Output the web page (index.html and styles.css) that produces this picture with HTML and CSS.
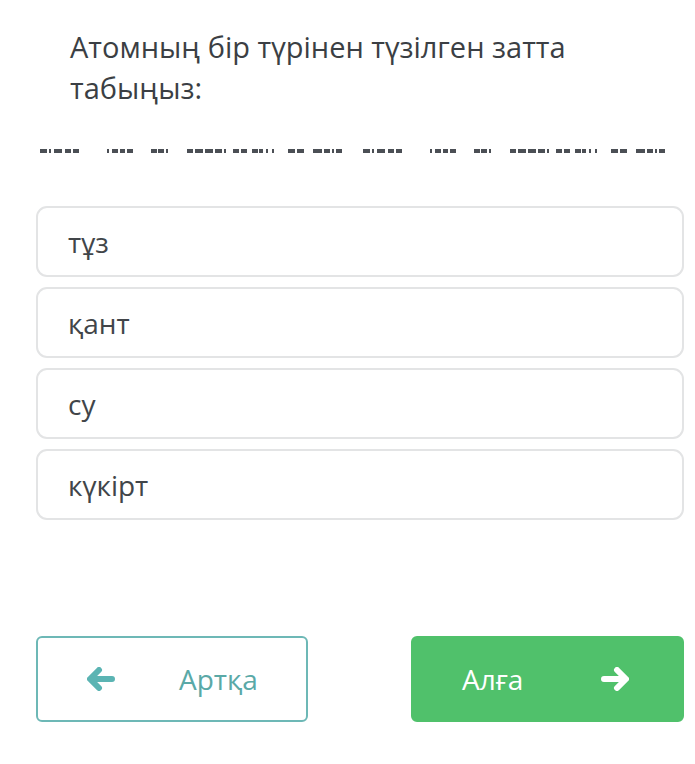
FILE: index.html
```html
<!DOCTYPE html>
<html lang="kk">
<head>
<meta charset="utf-8">
<link rel="stylesheet" href="styles.css">
</head>
<body>
<div class="page">
  <h1 class="question">Атомның бір түрінен түзілген затта табыңыз:</h1>
  <svg class="dashes" width="695" height="4" viewBox="0 0 695 4" aria-hidden="true">
    <g fill="#4b4f55">
      <g id="half">
        <rect x="40" y="0" width="7" height="4"/><rect x="49" y="0" width="2" height="4"/><rect x="54" y="0" width="8" height="4"/><rect x="65" y="0" width="6" height="4"/><rect x="73" y="0" width="6" height="4"/>
        <rect x="107" y="0" width="2" height="4"/><rect x="112" y="0" width="6" height="4"/><rect x="120" y="0" width="5" height="4"/><rect x="127" y="0" width="6" height="4"/>
        <rect x="151" y="0" width="6" height="4"/><rect x="158" y="0" width="6" height="4"/><rect x="166" y="0" width="2" height="4"/>
        <rect x="187" y="0" width="6" height="4"/><rect x="195" y="0" width="8" height="4"/><rect x="205" y="0" width="8" height="4"/><rect x="215" y="0" width="7" height="4"/><rect x="224" y="0" width="2" height="4"/>
        <rect x="233" y="0" width="6" height="4"/><rect x="241" y="0" width="6" height="4"/>
        <rect x="252" y="0" width="6" height="4"/><rect x="259" y="0" width="4" height="4"/><rect x="266" y="0" width="2" height="4"/><rect x="272" y="0" width="2" height="4"/>
        <rect x="288" y="0" width="7" height="4"/><rect x="297" y="0" width="7" height="4"/>
        <rect x="313" y="0" width="9" height="4"/><rect x="324" y="0" width="6" height="4"/><rect x="332" y="0" width="2" height="4"/><rect x="336" y="0" width="6" height="4"/>
      </g>
      <use href="#half" x="323"/>
    </g>
  </svg>
  <ul class="options">
    <li class="option">тұз</li>
    <li class="option">қант</li>
    <li class="option">су</li>
    <li class="option">күкірт</li>
  </ul>
  <div class="nav">
    <button class="btn btn-back">
      <svg class="arrow" width="28" height="24" viewBox="0 0 28 24" aria-hidden="true"><path d="M12 3 L3 12 L12 21 M4 12 H25" fill="none" stroke="currentColor" stroke-width="6" stroke-linecap="round" stroke-linejoin="round"/></svg>
      <span class="btn-label">Артқа</span>
    </button>
    <button class="btn btn-next">
      <span class="btn-label">Алға</span>
      <svg class="arrow" width="28" height="24" viewBox="0 0 28 24" aria-hidden="true"><path d="M16 3 L25 12 L16 21 M24 12 H3" fill="none" stroke="currentColor" stroke-width="6" stroke-linecap="round" stroke-linejoin="round"/></svg>
    </button>
  </div>
</div>
</body>
</html>
```

FILE: styles.css
```css
* { box-sizing: border-box; }
html, body {
  margin: 0;
  padding: 0;
  background: #ffffff;
}
body {
  font-family: "Open Sans", "Noto Sans", sans-serif;
  color: #3d4146;
}
.page {
  width: 695px;
  height: 764px;
  overflow: hidden;
}
.question {
  margin: 26px 90px 0 70px;
  font-size: 29px;
  font-weight: 400;
  line-height: 41px;
  color: #3b3f44;
}
.dashes {
  display: block;
  margin-top: 41px;
}
.options {
  list-style: none;
  margin: 53px 11px 0 36px;
  padding: 0;
  display: flex;
  flex-direction: column;
  gap: 10px;
}
.option {
  height: 71px;
  border: 2px solid #e3e4e5;
  border-radius: 11px;
  padding-left: 30px;
  display: flex;
  align-items: center;
  font-size: 28px;
  color: #414549;
}
.nav {
  margin: 116px 11px 0 36px;
  display: flex;
  justify-content: space-between;
}
.btn {
  font-family: "Open Sans", "Noto Sans", sans-serif;
  font-size: 28px;
  height: 86px;
  border-radius: 6px;
  display: flex;
  align-items: center;
  cursor: pointer;
  padding: 0;
}
.btn-back {
  width: 272px;
  background: #ffffff;
  border: 2px solid #6db8b6;
  color: #5aa9a7;
  padding-left: 49px;
}
.btn-back .arrow { color: #5bb4b3; }
.btn-back .btn-label { margin-left: 64px; }
.btn-next {
  width: 273px;
  background: #50c16b;
  border: 2px solid #50c16b;
  color: #ffffff;
  padding-left: 49px;
}
.btn-next .btn-label { margin-right: 78px; }
.btn-next .arrow { color: #ffffff; }
```
